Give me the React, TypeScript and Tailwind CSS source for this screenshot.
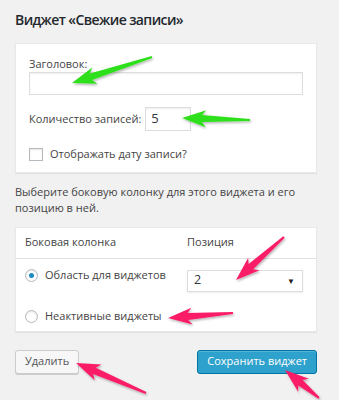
import React from 'react';

type Pt = [number, number];

function arrowPoints(tail: Pt, tip: Pt, headLen = 20, headW = 17, w0 = 2, w1 = 7, barb = 4) {
  const dx = tip[0] - tail[0];
  const dy = tip[1] - tail[1];
  const len = Math.hypot(dx, dy);
  const ux = dx / len;
  const uy = dy / len;
  const nx = -uy;
  const ny = ux;
  const bx = tip[0] - ux * headLen;
  const by = tip[1] - uy * headLen;
  const wx = bx - ux * barb;
  const wy = by - uy * barb;
  const pts: Pt[] = [
    [tail[0] + (nx * w0) / 2, tail[1] + (ny * w0) / 2],
    [bx + (nx * w1) / 2, by + (ny * w1) / 2],
    [wx + (nx * headW) / 2, wy + (ny * headW) / 2],
    tip,
    [wx - (nx * headW) / 2, wy - (ny * headW) / 2],
    [bx - (nx * w1) / 2, by - (ny * w1) / 2],
    [tail[0] - (nx * w0) / 2, tail[1] - (ny * w0) / 2],
  ];
  return pts.map((p) => p.map((v) => v.toFixed(1)).join(',')).join(' ');
}

const GREEN = '#2fe01a';
const PINK = '#fb1d67';

const arrows: { tail: Pt; tip: Pt; color: string }[] = [
  { tail: [152, 57], tip: [72, 83], color: GREEN },
  { tail: [250, 120], tip: [182, 118], color: GREEN },
  { tail: [284, 237], tip: [236, 280], color: PINK },
  { tail: [233, 313], tip: [168, 318], color: PINK },
  { tail: [146, 393], tip: [76, 363], color: PINK },
  { tail: [319, 398], tip: [285, 370], color: PINK },
];

function Radio({ checked }: { checked?: boolean }) {
  return (
    <span className="w-[13px] h-[13px] rounded-full border border-[#b4b9be] bg-white shadow-[inset_0_1px_2px_rgba(0,0,0,0.1)] flex items-center justify-center shrink-0">
      {checked && <span className="w-[5px] h-[5px] rounded-full bg-[#1e8cbe]" />}
    </span>
  );
}

export default function App() {
  return (
    <div
      className="relative w-[339px] h-[400px] bg-[#f1f1f1] text-[#444] overflow-hidden"
      style={{ fontFamily: '"Open Sans", "Noto Sans", sans-serif' }}
    >
      <div className="pl-[15px] pr-[22px] pt-[9px]">
        <h2 className="text-[14px] leading-[22px] font-semibold tracking-[-0.6px] text-[#23282d]">
          Виджет «Свежие записи»
        </h2>

        <div className="mt-[12px] bg-white shadow-[0_1px_1px_rgba(0,0,0,0.06)] border border-[#e8e8e8] px-[13px] pt-[11px] pb-[9px] text-[11px]">
          <label className="block leading-[17px]">Заголовок:</label>
          <div className="h-[23px] border border-[#ddd] shadow-[inset_0_1px_2px_rgba(0,0,0,0.07)]" />

          <div className="mt-[12px] flex items-center gap-[4px]">
            <span>Количество записей:</span>
            <div className="w-[46px] h-[24px] border border-[#ddd] shadow-[inset_0_1px_2px_rgba(0,0,0,0.07)] flex items-center pl-[5px] text-[13px] text-[#32373c]">
              5
            </div>
          </div>

          <div className="mt-[15px] flex items-center gap-[7px]">
            <span className="w-[14px] h-[13px] border border-[#b4b9be] shadow-[inset_0_1px_2px_rgba(0,0,0,0.1)] bg-white" />
            <span>Отображать дату записи?</span>
          </div>
        </div>

        <p className="mt-[11px] text-[11px] leading-[16px]">
          Выберите боковую колонку для этого виджета и его позицию в ней.
        </p>

        <div className="mt-[11px] bg-white border border-[#e8e8e8] shadow-[0_1px_1px_rgba(0,0,0,0.06)] text-[11px]">
          <div className="h-[31px] flex items-center px-[9px] border-b border-[#e1e1e1]">
            <span className="w-[162px]">Боковая колонка</span>
            <span>Позиция</span>
          </div>
          <div className="px-[9px] pt-[10px] pb-[7px]">
            <div className="flex items-start">
              <div className="w-[162px] h-[14px] flex items-center gap-[7px]">
                <Radio checked />
                <span>Область для виджетов</span>
              </div>
              <div className="mt-[1px] w-[116px] h-[22px] border border-[#ddd] shadow-[0_1px_2px_rgba(0,0,0,0.07)] flex items-center justify-between pl-[6px] pr-[7px] text-[12.5px] text-[#32373c]">
                <span>2</span>
                <span className="text-[8px] text-[#222]">▼</span>
              </div>
            </div>
            <div className="mt-[18px] h-[14px] flex items-center gap-[7px]">
              <Radio />
              <span>Неактивные виджеты</span>
            </div>
          </div>
        </div>

        <div className="mt-[18px] flex justify-between items-center text-[11px]">
          <button className="h-[24px] px-[9px] bg-[#f7f7f7] border border-[#cccccc] rounded-[3px] shadow-[0_1px_0_#ccc] text-[#555]">
            Удалить
          </button>
          <button className="h-[24px] px-[9px] bg-[#2ea2cc] border border-[#0074a2] rounded-[3px] shadow-[inset_0_1px_0_rgba(120,200,230,0.5)] text-white">
            Сохранить виджет
          </button>
        </div>
      </div>

      <svg className="absolute inset-0 pointer-events-none" width="339" height="400" viewBox="0 0 339 400">
        <defs>
          <filter id="sh" x="-20%" y="-20%" width="140%" height="140%">
            <feDropShadow dx="1" dy="1.5" stdDeviation="1.2" floodColor="#000" floodOpacity="0.3" />
          </filter>
        </defs>
        {arrows.map((a, i) => (
          <polygon key={i} points={arrowPoints(a.tail, a.tip)} fill={a.color} filter="url(#sh)" />
        ))}
      </svg>
    </div>
  );
}
